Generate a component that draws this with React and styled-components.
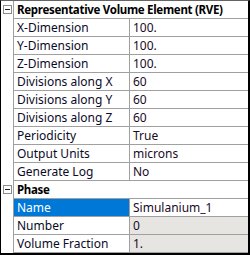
import styled, { createGlobalStyle } from "styled-components";

const GlobalStyle = createGlobalStyle`
  html, body {
    margin: 0;
    padding: 0;
    background: #fff;
  }
  body {
    font-family: "Noto Sans", "DejaVu Sans", sans-serif;
    font-size: 12px;
  }
`;

const Grid = styled.div`
  width: 250px;
  height: 255px;
  box-sizing: border-box;
  border-top: 1px solid #646464;
  border-left: 1px solid #000;
  border-right: 2px solid #000;
  border-bottom: 2px solid #000;
  background: #fff;
  display: flex;
  flex-direction: column;
  overflow: hidden;
`;

const Row = styled.div`
  display: flex;
  height: 18px;
  flex: 0 0 18px;
`;

const Gutter = styled.div`
  width: 12px;
  flex: 0 0 12px;
  border-right: 1px solid #a0a0a0;
  position: relative;
`;

const Toggle = styled.div`
  position: absolute;
  left: 2px;
  top: 4px;
  width: 7px;
  height: 7px;
  border: 1px solid #8c8c8c;
  background: #fff;
  &::after {
    content: "";
    position: absolute;
    left: 1px;
    top: 3px;
    width: 5px;
    height: 1px;
    background: #1e1e1e;
  }
`;

const Header = styled.div`
  flex: 1;
  border-bottom: 1px solid #a0a0a0;
  font-weight: 700;
  font-size: 11.5px;
  letter-spacing: -0.3px;
  color: #000;
  padding-left: 3px;
  line-height: 17px;
  white-space: nowrap;
`;

const Name = styled.div`
  width: 112px;
  flex: 0 0 112px;
  padding-left: 3px;
  border-right: 1px solid #a0a0a0;
  border-bottom: 1px solid #a0a0a0;
  line-height: 17px;
  white-space: nowrap;
  overflow: hidden;
  background: ${(p) => (p.$selected ? "#0078d7" : "#fff")};
  color: ${(p) => (p.$selected ? "#fff" : "#0a0a28")};
`;

const Value = styled.div`
  flex: 1;
  padding-left: 3px;
  border-bottom: 1px solid #a0a0a0;
  line-height: 17px;
  white-space: nowrap;
  overflow: hidden;
  color: #1a0a28;
  background: ${(p) => (p.$readOnly ? "#e7e5e2" : "#fff")};
`;

const categories = [
  {
    title: "Representative Volume Element (RVE)",
    props: [
      ["X-Dimension", "100."],
      ["Y-Dimension", "100."],
      ["Z-Dimension", "100."],
      ["Divisions along X", "60"],
      ["Divisions along Y", "60"],
      ["Divisions along Z", "60"],
      ["Periodicity", "True"],
      ["Output Units", "microns"],
      ["Generate Log", "No"],
    ],
  },
  {
    title: "Phase",
    props: [
      ["Name", "Simulanium_1", { selected: true }],
      ["Number", "0", { readOnly: true }],
      ["Volume Fraction", "1.", { readOnly: true }],
    ],
  },
];

const Category = ({ title, props }) => (
  <>
    <Row>
      <Gutter>
        <Toggle />
      </Gutter>
      <Header>{title}</Header>
    </Row>
    {props.map(([name, value, flags = {}]) => (
      <Row key={name}>
        <Gutter />
        <Name $selected={flags.selected}>{name}</Name>
        <Value $readOnly={flags.readOnly}>{value}</Value>
      </Row>
    ))}
  </>
);

export default function App() {
  return (
    <>
      <GlobalStyle />
      <Grid>
        {categories.map((c) => (
          <Category key={c.title} {...c} />
        ))}
      </Grid>
    </>
  );
}
